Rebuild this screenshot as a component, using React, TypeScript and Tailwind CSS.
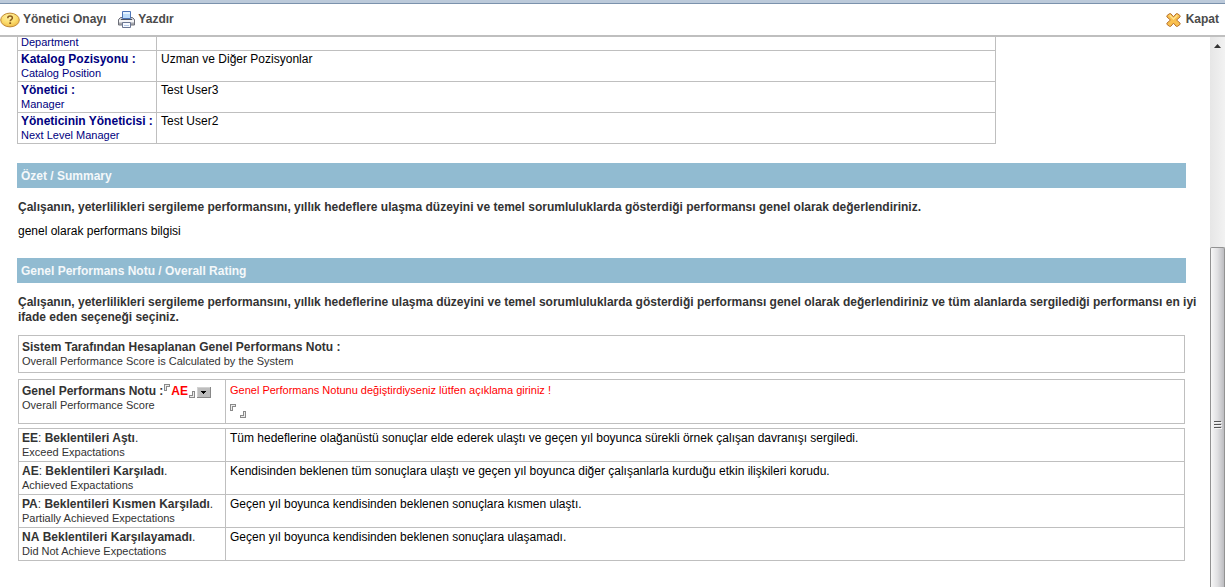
import React from "react";

const people = [
  { tr: "Katalog Pozisyonu :", en: "Catalog Position", value: "Uzman ve Diğer Pozisyonlar" },
  { tr: "Yönetici :", en: "Manager", value: "Test User3" },
  { tr: "Yöneticinin Yöneticisi :", en: "Next Level Manager", value: "Test User2" },
];

const ratings = [
  { code: "EE", sep: ": ", tr: "Beklentileri Aştı", en: "Exceed Expactations", text: "Tüm hedeflerine olağanüstü sonuçlar elde ederek ulaştı ve geçen yıl boyunca sürekli örnek çalışan davranışı sergiledi." },
  { code: "AE", sep: ": ", tr: "Beklentileri Karşıladı", en: "Achieved Expactations", text: "Kendisinden beklenen tüm sonuçlara ulaştı ve geçen yıl boyunca diğer çalışanlarla kurduğu etkin ilişkileri korudu." },
  { code: "PA", sep: ": ", tr: "Beklentileri Kısmen Karşıladı", en: "Partially Achieved Expectations", text: "Geçen yıl boyunca kendisinden beklenen sonuçlara kısmen ulaştı." },
  { code: "NA", sep: " ", tr: "Beklentileri Karşılayamadı", en: "Did Not Achieve Expectations", text: "Geçen yıl boyunca kendisinden beklenen sonuçlara ulaşamadı." },
];

function HelpIcon() {
  return (
    <svg width="20" height="16" viewBox="0 0 20 16" aria-hidden="true">
      <defs>
        <radialGradient id="help" cx="45%" cy="30%" r="70%">
          <stop offset="0" stopColor="#fff2a8" />
          <stop offset="0.6" stopColor="#fbdc6c" />
          <stop offset="1" stopColor="#eebb48" />
        </radialGradient>
      </defs>
      <ellipse cx="10" cy="8" rx="9.3" ry="6.9" fill="url(#help)" stroke="#c08a38" />
      <path d="M7.8 6.200c0-1.500 1-2.100 2.300-2.100s2.300.7 2.300 1.900c0 1.600-2.200 1.500-2.200 3.300" fill="none" stroke="#8a5a1c" strokeWidth="1.500" />
      <rect x="9.300" y="10.300" width="1.800" height="1.700" fill="#8a5a1c" />
    </svg>
  );
}

function PrintIcon() {
  return (
    <svg width="17" height="17" viewBox="0 0 17 17" aria-hidden="true">
      <path d="M2.500 6.500h12l2 2v5.500h-16v-5.500z" fill="#c9cbd0" stroke="#6c6e78" />
      <path d="M1 9h15v2H1z" fill="#f4f4f6" />
      <path d="M1 12.500h15v1H1z" fill="#85878f" />
      <path d="M4.500.5h8v7h-8z" fill="#bcdcfb" stroke="#4d74b6" />
      <path d="M5 1h7v2H5z" fill="#e5f3ff" />
      <path d="M3 8h11v1H3z" fill="#4d5361" />
      <path d="M4.500 11.500h8v5h-8z" fill="#f6f9ff" stroke="#6a7693" />
      <path d="M6 14.500h5" stroke="#b2c8e8" />
    </svg>
  );
}

function CloseIcon() {
  return (
    <svg width="15" height="14" viewBox="0 0 15 14" aria-hidden="true">
      <path d="M3.400.7h1.400L7.500 3.800 10.200.7h1.400l2.500 2v1.200L10.600 7l3.500 3.200v1.100l-2.500 2h-1.400l-2.700-3.100-2.700 3.100H3.400l-2.500-2v-1.100L4.400 7 .9 3.900V2.700z" fill="#f9c04e" stroke="#b5712f" strokeLinejoin="round" />
      <path d="M3.700 2.300 7.500 6l3.800-3.700" fill="none" stroke="#ffe391" strokeWidth="1.300" />
    </svg>
  );
}

function OpenMark() {
  return (
    <svg className="shrink-0" width="6" height="7" viewBox="0 0 6 7" shapeRendering="crispEdges" aria-hidden="true">
      <path d="M.5 7V.5H6M2.500 7V2.500H6M0 6.500h3M5.500 0v3" fill="none" stroke="#8a8a8a" />
      <path d="M1.500 6V1.500H5" fill="none" stroke="#ececec" />
    </svg>
  );
}

function CloseMark() {
  return (
    <svg className="shrink-0" width="6" height="7" viewBox="0 0 6 7" shapeRendering="crispEdges" aria-hidden="true">
      <path d="M0 6.500h5.500V0M0 4.500h3.500V0M.5 7V4M3 .5h3" fill="none" stroke="#8a8a8a" />
      <path d="M1 5.500h3.500V1" fill="none" stroke="#ececec" />
    </svg>
  );
}

function SectionTitle({ children }: { children: React.ReactNode }) {
  return <h2 className="bg-[#91bbd1] px-1 pt-[6px] pb-1 text-[12px] leading-[15px] font-bold text-[#f4f8fa]">{children}</h2>;
}

export default function App() {
  return (
    <div className="flex min-h-screen flex-col bg-white font-['Liberation_Sans',Arial,sans-serif] text-[12px] leading-[15px] text-black">
      <header className="border-b-2 border-[#bfbfbf]">
        <div className="h-1 border-b border-[#7b92ac] bg-[#bccada]" />
        <div className="flex h-[31px] items-center pr-[6px] font-bold text-[#4b4b4b]">
          <button type="button" className="flex items-center gap-[3px]">
            <HelpIcon />
            Yönetici Onayı
          </button>
          <button type="button" className="ml-3 flex items-center gap-[3px]">
            <PrintIcon />
            Yazdır
          </button>
          <button type="button" className="ml-auto flex items-center gap-[5px]">
            <CloseIcon />
            Kapat
          </button>
        </div>
      </header>

      <div className="flex flex-1">
        <main className="min-w-0 flex-1 pr-6 pl-[17px]">
          <table className="w-[83.75%] table-fixed border-separate border-spacing-0 border-r border-l border-[#bfbfbf] text-left">
            <colgroup>
              <col className="w-[139px]" />
              <col />
            </colgroup>
            <tbody>
              <tr>
                <th scope="row" className="border-r border-b border-[#bfbfbf] px-[3px] pb-[3px] text-[11px] leading-[10px] font-normal text-[#000080]">Department</th>
                <td className="border-b border-[#bfbfbf]" />
              </tr>
              {people.map((p) => (
                <tr key={p.en} className="align-top">
                  <th scope="row" className="border-r border-b border-[#bfbfbf] px-[3px] pt-px pb-px font-bold whitespace-nowrap text-[#000080]">
                    <span className="block leading-[14px]">{p.tr}</span>
                    <span className="block text-[11px] leading-[14px] font-normal">{p.en}</span>
                  </th>
                  <td className="border-b border-[#bfbfbf] px-1 pt-px leading-[14px]">{p.value}</td>
                </tr>
              ))}
            </tbody>
          </table>

          <section className="mt-[19px]">
            <SectionTitle>Özet / Summary</SectionTitle>
            <p className="mt-3 px-px font-bold text-[#333333]">
              Çalışanın, yeterlilikleri sergileme performansını, yıllık hedeflere ulaşma düzeyini ve temel sorumluluklarda gösterdiği performansı genel olarak değerlendiriniz.
            </p>
            <p className="mt-[9px] px-px">genel olarak performans bilgisi</p>
          </section>

          <section className="mt-[19px]">
            <SectionTitle>Genel Performans Notu / Overall Rating</SectionTitle>
            <p className="mt-3 -mr-5 px-px font-bold text-[#333333]">
              Çalışanın, yeterlilikleri sergileme performansını, yıllık hedeflerine ulaşma düzeyini ve temel sorumluluklarda gösterdiği performansı genel olarak değerlendiriniz ve tüm alanlarda sergilediği performansı en iyi ifade eden seçeneği seçiniz.
            </p>

            <div className="mx-px mt-[10px] border border-[#bfbfbf] px-[3px] pt-1 pb-1 text-[#333333]">
              <p className="leading-[14px] font-bold">Sistem Tarafından Hesaplanan Genel Performans Notu :</p>
              <p className="text-[11px] leading-[14px]">Overall Performance Score is Calculated by the System</p>
            </div>

            <div className="mx-px mt-[6px] flex border border-[#bfbfbf]">
              <div className="w-[207px] shrink-0 border-r border-[#bfbfbf] px-[3px] pt-1 text-[#333333]">
                <div className="flex h-[14px]">
                  <label htmlFor="score" className="leading-[14px] font-bold whitespace-nowrap">Genel Performans Notu :</label>
                  <span className="relative ml-px flex">
                    <OpenMark />
                    <select
                      id="score"
                      defaultValue="AE"
                      className="h-[14px] w-[41px] appearance-none bg-transparent pl-px text-[12px] leading-[14px] font-bold text-[#ff0000]"
                    >
                      <option>EE</option>
                      <option>AE</option>
                      <option>PA</option>
                      <option>NA</option>
                    </select>
                    <span className="pointer-events-none absolute right-0 bottom-0 flex items-end gap-[2px]">
                      <CloseMark />
                      <svg width="14" height="11" viewBox="0 0 14 11" shapeRendering="crispEdges" aria-hidden="true">
                        <path d="M0 0h14v11H0z" fill="#bdbdbd" />
                        <path d="M.5 11V.5H14" fill="none" stroke="#d2d2d2" />
                        <path d="M13.500 0v10.500H0" fill="none" stroke="#888888" />
                        <path d="M4 4h5v1H8v1H7v1H6V6H5V5H4z" fill="#000" />
                      </svg>
                    </span>
                  </span>
                </div>
                <p className="text-[11px] leading-[14px]">Overall Performance Score</p>
              </div>
              <div className="h-[43px] flex-1 px-1 pt-[3px]">
                <label htmlFor="note" className="block text-[11px] leading-[14px] text-[#ff0000]">
                  Genel Performans Notunu değiştirdiyseniz lütfen açıklama giriniz !
                </label>
                <div className="mt-[7px] flex h-[14px]">
                  <OpenMark />
                  <input id="note" type="text" className="h-[14px] w-1 outline-none" />
                  <span className="flex items-end">
                    <CloseMark />
                  </span>
                </div>
              </div>
            </div>

            <div className="mx-px mt-1 mb-[26px]">
              <table className="w-full table-fixed border-separate border-spacing-0 border-t border-l border-[#bfbfbf] text-left">
                <colgroup>
                  <col className="w-[207px]" />
                  <col />
                </colgroup>
                <tbody>
                  {ratings.map((r) => (
                    <tr key={r.code} className="align-top">
                      <th scope="row" className="border-r border-b border-[#bfbfbf] px-[3px] pt-[2px] pb-[2px] font-normal whitespace-nowrap text-[#333333]">
                        <span className="block leading-[14px]">
                          <b>{r.code}</b>
                          {r.sep}
                          <b>{r.tr}</b>.
                        </span>
                        <span className="block text-[11px] leading-[14px]">{r.en}</span>
                      </th>
                      <td className="border-r border-b border-[#bfbfbf] px-1 pt-[2px] leading-[14px]">{r.text}</td>
                    </tr>
                  ))}
                </tbody>
              </table>
            </div>
          </section>
        </main>

        <div className="flex w-[15px] shrink-0 flex-col bg-linear-to-r from-[#e6e6e6] to-[#f2f2f2]" aria-hidden="true">
          <div className="flex h-[210px] justify-center pt-[7px]">
            <svg width="7" height="4" viewBox="0 0 7 4">
              <path d="M0 4 3.500 0 7 4z" fill="#333333" />
            </svg>
          </div>
          <div className="flex flex-1 justify-center rounded-t-xs border-t border-r border-l border-[#929292] bg-linear-to-r from-[#f7f7f7] via-[#e0e0e2] to-[#bcbcc0] pt-[172px]">
            <svg width="8" height="9" viewBox="0 0 8 9" shapeRendering="crispEdges">
              <path d="M0 1.500h7M0 4.500h7M0 7.500h7" stroke="#555555" />
              <path d="M1 2.500h7M1 5.500h7M1 8.500h7" stroke="#f5f5f5" />
            </svg>
          </div>
        </div>
      </div>
    </div>
  );
}
